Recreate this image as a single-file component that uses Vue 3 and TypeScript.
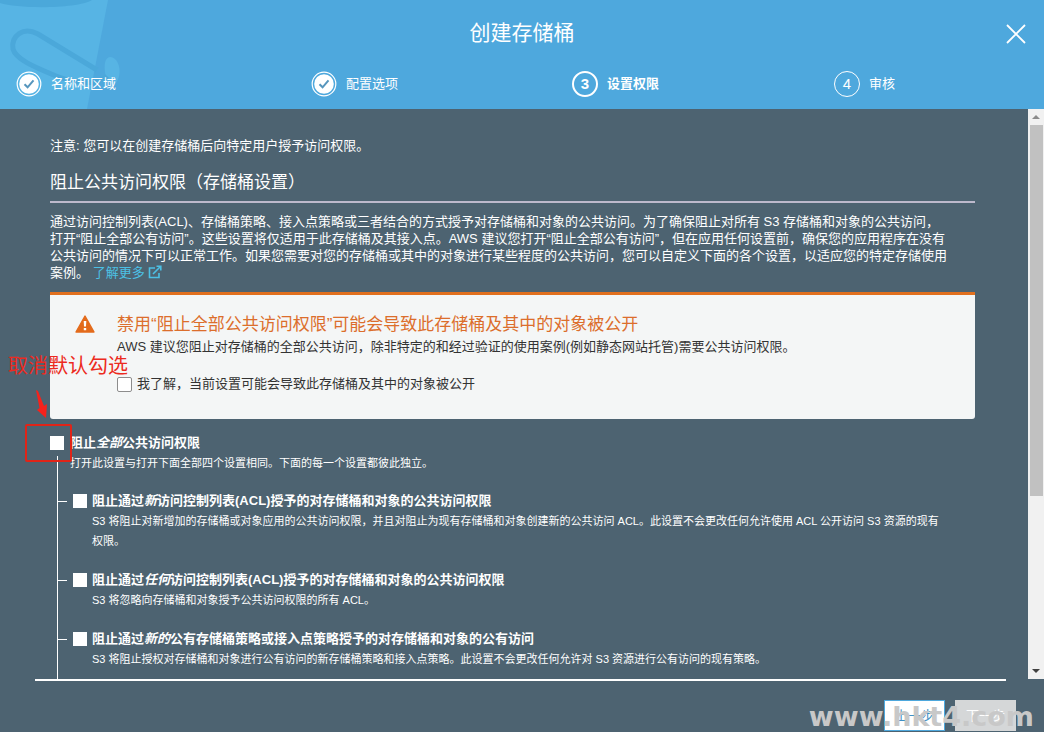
<script setup lang="ts">
import { ref } from 'vue'

interface Step { n: number; label: string; done: boolean; active: boolean }
interface Setting { id: string; before: string; em: string; after: string; text: string }

const steps: Step[] = [
  { n: 1, label: '名称和区域', done: true, active: false },
  { n: 2, label: '配置选项', done: true, active: false },
  { n: 3, label: '设置权限', done: false, active: true },
  { n: 4, label: '审核', done: false, active: false },
]

const settings: Setting[] = [
  {
    id: 'new-acl',
    before: '阻止通过',
    em: '新',
    after: '访问控制列表(ACL)授予的对存储桶和对象的公共访问权限',
    text: 'S3 将阻止对新增加的存储桶或对象应用的公共访问权限，并且对阻止为现有存储桶和对象创建新的公共访问 ACL。此设置不会更改任何允许使用 ACL 公开访问 S3 资源的现有\n权限。',
  },
  {
    id: 'any-acl',
    before: '阻止通过',
    em: '任何',
    after: '访问控制列表(ACL)授予的对存储桶和对象的公共访问权限',
    text: 'S3 将忽略向存储桶和对象授予公共访问权限的所有 ACL。',
  },
  {
    id: 'new-policy',
    before: '阻止通过',
    em: '新的',
    after: '公有存储桶策略或接入点策略授予的对存储桶和对象的公有访问',
    text: 'S3 将阻止授权对存储桶和对象进行公有访问的新存储桶策略和接入点策略。此设置不会更改任何允许对 S3 资源进行公有访问的现有策略。',
  },
]

const acknowledged = ref(false)
const blockAll = ref(false)
const chosen = ref<string[]>([])
</script>

<template>
  <div class="wizard">
    <header class="head">
      <svg class="bucket" viewBox="0 0 140 109" aria-hidden="true">
        <path d="M0 0H108L87 109H0Z" fill="#57b4e4" />
        <path d="M0 0H92C78 9 18 9 0 3Z" fill="#4ba8da" />
        <path d="M105 72C103 57 110 54 116 60C121 66 121 78 115 84L106 82Z" fill="#57b4e4" />
        <path d="M97 70L38 34C23 26 11 36 13 49C16 60 37 68 56 76C76 84 98 86 107 76" fill="none" stroke="#4ba8da" stroke-width="5" />
      </svg>
      <h1>创建存储桶</h1>
      <button class="close" type="button" aria-label="关闭">
        <svg viewBox="0 0 20 20"><path d="M1 1L19 19M19 1L1 19" /></svg>
      </button>
      <ol class="steps">
        <li v-for="s in steps" :key="s.n" :class="{ active: s.active }">
          <svg v-if="s.done" class="mark" viewBox="0 0 26 26" aria-hidden="true">
            <circle cx="13" cy="13" r="11.8" fill="none" stroke="#fff" stroke-width="1.2" />
            <circle cx="13" cy="13" r="9.8" fill="#fff" />
            <path d="M8.5 13.2L11.6 16.3L17.5 9.3" fill="none" stroke="#5796bd" stroke-width="2" />
          </svg>
          <span v-else class="mark num">{{ s.n }}</span>
          <span>{{ s.label }}</span>
        </li>
      </ol>
    </header>

    <div class="middle">
      <main class="content">
        <p class="note">注意: 您可以在创建存储桶后向特定用户授予访问权限。</p>
        <h2>阻止公共访问权限（存储桶设置）</h2>
        <p class="intro">
          通过访问控制列表(ACL)、存储桶策略、接入点策略或三者结合的方式授予对存储桶和对象的公共访问。为了确保阻止对所有 S3 存储桶和对象的公共访问，<br />
          打开“阻止全部公有访问”。这些设置将仅适用于此存储桶及其接入点。AWS 建议您打开“阻止全部公有访问”，但在应用任何设置前，确保您的应用程序在没有<br />
          公共访问的情况下可以正常工作。如果您需要对您的存储桶或其中的对象进行某些程度的公共访问，您可以自定义下面的各个设置，以适应您的特定存储使用<br />
          案例。
          <a href="#">了解更多
            <svg viewBox="0 0 14 14" aria-hidden="true"><path d="M7 3H1.5V12.5H11V8M5 9L12.5 1.5M8.5 1.2H12.8V5.5" /></svg>
          </a>
        </p>

        <section class="warning">
          <svg class="tri" viewBox="0 0 20 18" aria-hidden="true">
            <path d="M10 1L19 17H1Z" fill="#e36b1b" stroke="#e36b1b" stroke-width="1.4" stroke-linejoin="round" />
            <path d="M8.7 6H11.3L11 11.5H9ZM8.8 13H11.2V15.3H8.8Z" fill="#fff" />
          </svg>
          <div>
            <h3>禁用“阻止全部公共访问权限”可能会导致此存储桶及其中的对象被公开</h3>
            <p>AWS 建议您阻止对存储桶的全部公共访问，除非特定的和经过验证的使用案例(例如静态网站托管)需要公共访问权限。</p>
            <label class="ack">
              <input v-model="acknowledged" type="checkbox" />
              <span>我了解，当前设置可能会导致此存储桶及其中的对象被公开</span>
            </label>
          </div>
        </section>

        <section class="settings">
          <div class="row all">
            <input id="block-all" v-model="blockAll" type="checkbox" />
            <div>
              <label for="block-all">阻止<em>全部</em>公共访问权限</label>
              <p>打开此设置与打开下面全部四个设置相同。下面的每一个设置都彼此独立。</p>
            </div>
            <div class="callout">
              <span>取消默认勾选</span>
              <svg viewBox="0 0 12 30" aria-hidden="true"><path d="M1 1L3 2L9 17L12 15L11 29L2 21L4.5 19Z" /></svg>
              <i></i>
            </div>
          </div>
          <ul>
            <li v-for="s in settings" :key="s.id" class="row">
              <input :id="s.id" v-model="chosen" :value="s.id" type="checkbox" />
              <div>
                <label :for="s.id">{{ s.before }}<em>{{ s.em }}</em>{{ s.after }}</label>
                <p>{{ s.text }}</p>
              </div>
            </li>
          </ul>
        </section>
      </main>
      <div class="scrollbar" aria-hidden="true">
        <svg viewBox="0 0 16 16"><path d="M4 10L8 6L12 10Z" fill="#8b8b8b" /></svg>
        <div class="track"><div class="thumb"></div></div>
        <svg viewBox="0 0 16 16"><path d="M4 6L8 10L12 6Z" fill="#404040" /></svg>
      </div>
    </div>

    <footer class="foot">
      <button type="button" class="prev">上一步</button>
      <button type="button" class="next">下一步</button>
      <span class="stamp">www.hkt4.com</span>
    </footer>
  </div>
</template>

<style>
body {
  margin: 0;
}
</style>

<style scoped>
.wizard {
  height: 100vh;
  display: flex;
  flex-direction: column;
  overflow: hidden;
  background: #4d6371;
  color: #fff;
  font: 13px/18px "Liberation Sans", "Noto Sans CJK SC", sans-serif;
}
h1, h2, h3, p, ol, ul {
  margin: 0;
  padding: 0;
  font-weight: 400;
}
ol, ul {
  list-style: none;
}
.head {
  position: relative;
  flex: none;
  padding: 18px 0 12px;
  background: #4ea8dd;
}
.bucket {
  position: absolute;
  left: 0;
  top: 0;
  width: 140px;
  height: 109px;
}
h1 {
  position: relative;
  font-size: 21px;
  line-height: 30px;
  text-align: center;
}
.close {
  position: absolute;
  right: 18px;
  top: 24px;
  width: 20px;
  height: 20px;
  padding: 0;
  border: 0;
  background: none;
}
.close svg {
  display: block;
  fill: none;
  stroke: #fff;
  stroke-width: 1.8;
}
.steps {
  position: relative;
  display: grid;
  grid-template-columns: 295fr 261fr 262fr 210fr;
  margin-top: 23px;
  padding-left: 16px;
}
.steps li {
  display: flex;
  align-items: center;
  gap: 9px;
}
.steps .active {
  font-weight: 700;
}
.mark {
  box-sizing: border-box;
  width: 26px;
  height: 26px;
}
.num {
  border: 1px solid #fff;
  border-radius: 50%;
  font-size: 15px;
  line-height: 24px;
  text-align: center;
}
.active .num {
  border-width: 2px;
  line-height: 22px;
}
.middle {
  flex: 1;
  min-height: 0;
  display: flex;
}
.content {
  flex: 1;
  min-width: 0;
  overflow: hidden;
  padding: 28px 53px 0 50px;
}
h2 {
  margin-top: 16px;
  padding-bottom: 6px;
  border-bottom: 2px solid #bdb9cc;
  font-size: 17px;
  line-height: 24px;
}
.intro {
  margin-top: 10px;
  line-height: 17px;
  white-space: nowrap;
}
.intro a {
  color: #4cc0e4;
  text-decoration: none;
}
.intro svg {
  width: 14px;
  height: 14px;
  vertical-align: -2px;
  fill: none;
  stroke: currentColor;
  stroke-width: 1.6;
}
.warning {
  display: flex;
  gap: 22px;
  margin-top: 11px;
  padding: 17px 25px 26px;
  border-top: 3px solid #e1701e;
  border-radius: 0 0 3px 3px;
  background: #f4f6f6;
  color: #333;
}
.tri {
  flex: none;
  width: 20px;
  height: 18px;
  margin-top: 3px;
}
h3 {
  color: #dc6e2c;
  font-size: 17px;
  line-height: 26px;
}
.ack {
  display: flex;
  align-items: center;
  gap: 5px;
  margin-top: 19px;
}
input {
  appearance: none;
  flex: none;
  box-sizing: border-box;
  width: 15px;
  height: 15px;
  margin: 0;
  border: 1px solid #8d8d8d;
  border-radius: 2px;
  background: #fff;
}
input:checked {
  background: #2f7fc0;
}
.settings {
  margin-top: 14px;
}
.row {
  position: relative;
  display: flex;
  gap: 5px;
  line-height: 20px;
}
.row input {
  width: 14px;
  height: 14px;
  margin-top: 3px;
  border: 0;
  border-radius: 0;
}
.row label {
  display: block;
  font-weight: 700;
}
.row p {
  font-size: 11px;
  line-height: 20px;
  white-space: pre;
}
.settings ul {
  display: flex;
  flex-direction: column;
  gap: 19px;
  margin-left: 7px;
  padding: 18px 0 60px 15px;
  border-left: 1px solid #fff;
}
.settings li::before {
  content: "";
  position: absolute;
  left: -15px;
  top: 10px;
  width: 9px;
  height: 1px;
  background: #fff;
}
.all {
  gap: 6px;
}
.all::after {
  content: "";
  position: absolute;
  left: 7px;
  top: 23px;
  bottom: 0;
  width: 1px;
  background: #fff;
}
.callout {
  position: absolute;
  z-index: 1;
  left: -42px;
  top: -81px;
  color: #ec2a20;
  font-size: 20px;
  line-height: 28px;
  white-space: nowrap;
  pointer-events: none;
}
.callout svg {
  display: block;
  width: 12px;
  height: 30px;
  margin: 9px 0 0 27px;
  fill: #f5221c;
}
.callout i {
  display: block;
  box-sizing: border-box;
  width: 47px;
  height: 38px;
  margin: 5px 0 0 17px;
  border: 2px solid #e02418;
  border-radius: 2px;
}
.scrollbar {
  display: flex;
  flex-direction: column;
  flex: none;
  width: 16px;
  background: #f1f1f1;
}
.scrollbar svg {
  display: block;
  width: 16px;
  height: 16px;
}
.track {
  flex: 1;
  padding: 0 1px 0 2px;
}
.thumb {
  height: 69%;
  background: #c1c1c1;
}
.foot {
  position: relative;
  flex: none;
  display: flex;
  justify-content: flex-end;
  gap: 10px;
  padding: 21px 28px 1px 0;
}
.foot::before {
  content: "";
  position: absolute;
  left: 35px;
  right: 38px;
  top: 0;
  height: 2px;
  background: #fff;
}
.foot button {
  box-sizing: border-box;
  width: 61px;
  height: 31px;
  padding: 0;
  border: 1px solid #4ea8dd;
  background: #fff;
  color: #3f8fc4;
  font: inherit;
}
.foot .next {
  border-color: #d5d7d8;
  background: #d5d7d8;
  color: #fff;
}
.stamp {
  position: absolute;
  right: 10px;
  top: 23px;
  color: #c8c8c8;
  font: 700 27px/30px "DejaVu Sans", sans-serif;
  pointer-events: none;
}
</style>
